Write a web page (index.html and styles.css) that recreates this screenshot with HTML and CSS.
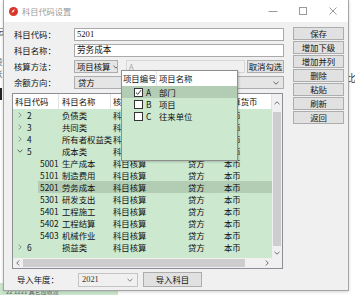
FILE: index.html
```html
<!DOCTYPE html>
<html lang="zh-CN">
<head>
<meta charset="utf-8">
<title>科目代码设置</title>
<link rel="stylesheet" href="styles.css">
</head>
<body>
<div class="bg-left">
  <span class="bl-ch c1">云</span>
  <span class="bl-ch c2">袋</span>
  <span class="bl-ch c3">张</span>
  <span class="bl-bar"></span>
</div>
<div class="bg-right"><span class="br-ch">比</span></div>
<div class="bg-bottom">
  <div class="bb-line">21 1124 应收股利及其他应收款</div>
  <div class="bb-line">22 1221 其它应收款</div>
</div>

<div class="dlg">
  <div class="titlebar">
    <span class="ticon"><svg width="9" height="9" viewBox="0 0 9 9"><circle cx="4.5" cy="4.5" r="4.5" fill="#d9352b"/><path d="M2.6 6.2 C2.8 4 4 2.6 6.3 2.5 C5 3.4 4.6 4.3 4.8 5.3 C4.1 4.8 3.4 5.3 2.6 6.2Z" fill="#fff"/></svg></span>
    <span class="ttext">科目代码设置</span>
    <span class="tctrls">
      <span class="tbtn"><svg width="10" height="10" viewBox="0 0 10 10"><path d="M0.5 5.5H9.5" stroke="#9a9a9a" stroke-width="1"/></svg></span>
      <span class="tbtn"><svg width="10" height="10" viewBox="0 0 10 10"><rect x="1.5" y="1.5" width="7" height="7" fill="none" stroke="#9a9a9a" stroke-width="1"/></svg></span>
      <span class="tbtn"><svg width="10" height="10" viewBox="0 0 10 10"><path d="M1.5 1.5L8.5 8.5M8.5 1.5L1.5 8.5" stroke="#9a9a9a" stroke-width="1"/></svg></span>
    </span>
  </div>

  <div class="dbody">
    <div class="main">
      <div class="form">
        <label class="flabel">科目代码：</label>
        <div class="input">5201</div>
        <label class="flabel">科目名称：</label>
        <div class="input">劳务成本</div>
        <label class="flabel">核算方法：</label>
        <div class="fline">
          <div class="combo combo-sm"><span class="ctext">项目核算</span><svg class="carr" width="6" height="4" viewBox="0 0 6 4"><path d="M0.5 0.8L3 3.2L5.5 0.8" fill="none" stroke="#555" stroke-width="0.9"/></svg></div>
          <div class="dis">A</div>
          <div class="btn btn-cancel">取消勾选</div>
        </div>
        <label class="flabel">余额方向：</label>
        <div class="combo"><span class="ctext">贷方</span><svg class="carr" width="6" height="4" viewBox="0 0 6 4"><path d="M0.5 0.8L3 3.2L5.5 0.8" fill="none" stroke="#555" stroke-width="0.9"/></svg></div>
      </div>

      <div class="table">
        <div class="tview">
          <div class="thead">
            <div class="th">科目代码</div>
            <div class="th th2">科目名称</div>
            <div class="th">核算方法</div>
            <div class="th">余额方向</div>
            <div class="th">核算货币</div>
          </div>
          <div class="tr"><div class="td c1"><span class="exp"><svg width="4" height="6" viewBox="0 0 4 6"><path d="M0.6 0.5L3.2 3L0.6 5.5" fill="none" stroke="#888" stroke-width="0.9"/></svg></span>2</div><div class="td">负债类</div><div class="td">科目核算</div><div class="td">贷方</div><div class="td">本币</div></div>
          <div class="tr"><div class="td c1"><span class="exp"><svg width="4" height="6" viewBox="0 0 4 6"><path d="M0.6 0.5L3.2 3L0.6 5.5" fill="none" stroke="#888" stroke-width="0.9"/></svg></span>3</div><div class="td">共同类</div><div class="td">科目核算</div><div class="td">贷方</div><div class="td">本币</div></div>
          <div class="tr"><div class="td c1"><span class="exp"><svg width="4" height="6" viewBox="0 0 4 6"><path d="M0.6 0.5L3.2 3L0.6 5.5" fill="none" stroke="#888" stroke-width="0.9"/></svg></span>4</div><div class="td">所有者权益类</div><div class="td">科目核算</div><div class="td">贷方</div><div class="td">本币</div></div>
          <div class="tr"><div class="td c1"><span class="exp"><svg width="6" height="4" viewBox="0 0 6 4"><path d="M0.5 0.6L3 3.2L5.5 0.6" fill="none" stroke="#555" stroke-width="0.9"/></svg></span>5</div><div class="td">成本类</div><div class="td">科目核算</div><div class="td">贷方</div><div class="td">本币</div></div>
          <div class="tr"><div class="td c1 child">5001</div><div class="td">生产成本</div><div class="td">科目核算</div><div class="td">贷方</div><div class="td">本币</div></div>
          <div class="tr"><div class="td c1 child">5101</div><div class="td">制造费用</div><div class="td">科目核算</div><div class="td">贷方</div><div class="td">本币</div></div>
          <div class="tr sel"><div class="td c1 child">5201</div><div class="td">劳务成本</div><div class="td">科目核算</div><div class="td">贷方</div><div class="td">本币</div></div>
          <div class="tr"><div class="td c1 child">5301</div><div class="td">研发支出</div><div class="td">科目核算</div><div class="td">贷方</div><div class="td">本币</div></div>
          <div class="tr"><div class="td c1 child">5401</div><div class="td">工程施工</div><div class="td">科目核算</div><div class="td">贷方</div><div class="td">本币</div></div>
          <div class="tr"><div class="td c1 child">5402</div><div class="td">工程结算</div><div class="td">科目核算</div><div class="td">贷方</div><div class="td">本币</div></div>
          <div class="tr"><div class="td c1 child">5403</div><div class="td">机械作业</div><div class="td">科目核算</div><div class="td">贷方</div><div class="td">本币</div></div>
          <div class="tr"><div class="td c1"><span class="exp"><svg width="4" height="6" viewBox="0 0 4 6"><path d="M0.6 0.5L3.2 3L0.6 5.5" fill="none" stroke="#888" stroke-width="0.9"/></svg></span>6</div><div class="td">损益类</div><div class="td">科目核算</div><div class="td">贷方</div><div class="td">本币</div></div>
        </div>
        <div class="vscroll">
          <div class="sbtn sbtn-v"><svg width="6" height="4" viewBox="0 0 6 4"><path d="M0.5 3.2L3 0.8L5.5 3.2" fill="none" stroke="#606060" stroke-width="0.9"/></svg></div>
          <div class="vthumb"></div>
          <div class="sbtn sbtn-v"><svg width="6" height="4" viewBox="0 0 6 4"><path d="M0.5 0.8L3 3.2L5.5 0.8" fill="none" stroke="#606060" stroke-width="0.9"/></svg></div>
        </div>
        <div class="hscroll">
          <div class="sbtn sbtn-h"><svg width="4" height="6" viewBox="0 0 4 6"><path d="M3.2 0.5L0.8 3L3.2 5.5" fill="none" stroke="#606060" stroke-width="0.9"/></svg></div>
          <div class="hthumb"></div>
          <div class="htrack"></div>
          <div class="sbtn sbtn-h"><svg width="4" height="6" viewBox="0 0 4 6"><path d="M0.8 0.5L3.2 3L0.8 5.5" fill="none" stroke="#606060" stroke-width="0.9"/></svg></div>
        </div>
        <div class="corner"></div>
      </div>

      <div class="bottom">
        <label class="blabel">导入年度：</label>
        <div class="combo combo-year"><span class="ctext">2021</span><svg class="carr" width="6" height="4" viewBox="0 0 6 4"><path d="M0.5 0.8L3 3.2L5.5 0.8" fill="none" stroke="#777" stroke-width="0.9"/></svg></div>
        <div class="btn btn-import">导入科目</div>
      </div>
    </div>

    <div class="side">
      <div class="btn sbtn-side">保存</div>
      <div class="btn sbtn-side">增加下级</div>
      <div class="btn sbtn-side">增加并列</div>
      <div class="btn sbtn-side">删除</div>
      <div class="btn sbtn-side">粘贴</div>
      <div class="btn sbtn-side">刷新</div>
      <div class="btn sbtn-side">返回</div>
    </div>
  </div>

  <div class="popup">
    <div class="phead">
      <div class="ph ph1">项目编号</div>
      <div class="ph ph2">项目名称</div>
    </div>
    <div class="prow psel">
      <div class="pc1"><span class="chk"><svg width="7" height="7" viewBox="0 0 7 7"><path d="M1 3.6L2.8 5.3L6 1.2" fill="none" stroke="#222" stroke-width="0.9"/></svg></span><span class="pcode">A</span></div>
      <div class="pc2">部门</div>
    </div>
    <div class="prow">
      <div class="pc1"><span class="chk"></span><span class="pcode">B</span></div>
      <div class="pc2">项目</div>
    </div>
    <div class="prow">
      <div class="pc1"><span class="chk"></span><span class="pcode">C</span></div>
      <div class="pc2">往来单位</div>
    </div>
  </div>
</div>
</body>
</html>
```

FILE: styles.css
```css
* { box-sizing: border-box; }
html, body { margin: 0; padding: 0; }
body {
  width: 355px;
  height: 295px;
  overflow: hidden;
  position: relative;
  background: #fff;
  font-family: "Noto Sans CJK SC", "Noto Sans", sans-serif;
  font-size: 8.4px;
  color: #111;
}

/* background application fragments */
.bg-left { position: absolute; left: 0; top: 0; width: 4px; height: 295px; overflow: hidden; }
.bl-ch { position: absolute; left: -6px; font-size: 8.4px; color: #555; line-height: 10px; }
.bl-ch.c1 { top: 26px; }
.bl-ch.c2 { top: 56px; }
.bl-ch.c3 { top: 68px; }
.bl-bar { position: absolute; left: 0; top: 88px; width: 2px; height: 12px; background: #222; }
.bg-right { position: absolute; left: 346px; top: 72px; }
.br-ch { font-size: 10px; color: #333; line-height: 11px; }
.bg-bottom {
  position: absolute; left: 0; top: 283px; width: 118px; height: 12px;
  background: #cce8cf; color: #666; font-size: 6px; line-height: 6px; padding-left: 6px;
  white-space: nowrap; overflow: hidden;
}
.bb-line { height: 6px; }

/* dialog window */
.dlg {
  position: absolute;
  left: 3px;
  top: 0;
  width: 346px;
  height: 291px;
  background: #f0f0f0;
  border: 1px solid #a5a5a5;
  border-top: none;
  box-shadow: 0 1px 3px rgba(0,0,0,0.18);
}
.titlebar {
  height: 22px;
  background: #fff;
  display: flex;
  align-items: center;
}
.ticon { width: 9px; height: 9px; margin-left: 5px; display: flex; }
.ttext { margin-left: 4px; color: #9a9a9a; font-size: 8.2px; line-height: 10px; }
.tctrls { margin-left: auto; display: flex; height: 22px; }
.tbtn { width: 30px; height: 22px; display: flex; align-items: center; justify-content: center; }

.dbody {
  display: grid;
  grid-template-columns: 271px 51px;
  column-gap: 10px;
  padding: 5px 0 0 8px;
}
.main { display: flex; flex-direction: column; }

/* form */
.form {
  display: grid;
  grid-template-columns: 60px 210px;
  grid-auto-rows: 13px;
  row-gap: 3px;
  padding: 1px 0 0 2px;
  width: 272px;
}
.flabel { line-height: 13px; color: #111; }
.input {
  background: #fff;
  border: 1px solid #a9a9a9;
  padding-left: 2px;
  line-height: 11px;
  font-family: "Liberation Serif", "Noto Sans CJK SC", serif;
  font-size: 8.6px;
}
.fline { display: flex; gap: 0; }
.combo {
  background: #e5e5e5;
  border: 1px solid #adadad;
  display: flex;
  align-items: center;
  padding: 0 4px 0 3px;
  line-height: 11px;
  white-space: nowrap;
  overflow: hidden;
}
.ctext { white-space: nowrap; }
.combo .carr { margin-left: auto; flex: none; }
.combo-sm { width: 44px; padding: 0 2px 0 2px; }
.combo-sm .carr { margin-left: 2px; }
.dis {
  width: 119px;
  margin-left: 8px;
  background: #f0f0f0;
  border: 1px solid #d6d6d6;
  color: #a0a0a0;
  font-size: 7.5px;
  line-height: 11px;
  padding-left: 2px;
}
.btn {
  background: #e1e1e1;
  border: 1px solid #adadad;
  text-align: center;
  color: #111;
  white-space: nowrap;
}
.btn-cancel { width: 37px; margin-left: 2px; line-height: 11px; }

/* table */
.table {
  margin-top: 4px;
  height: 176px;
  border: 1px solid #8c8f96;
  background: #fff;
  display: grid;
  grid-template-columns: 259px 10px;
  grid-template-rows: 164px 10px;
}
.tview { background: #cce8cf; overflow: hidden; }
.thead {
  display: grid;
  grid-template-columns: 46px 52px 75px 36px 50px;
  height: 15px;
  background: #fff;
}
.th {
  line-height: 15px;
  padding-left: 2px;
  border-right: 1px solid #e3e3e3;
  white-space: nowrap;
  overflow: hidden;
}
.th2 { padding-left: 3px; }
.tr {
  display: grid;
  grid-template-columns: 46px 52px 75px 36px 50px;
  height: 12px;
  line-height: 12px;
}
.tr.sel { background: linear-gradient(90deg, transparent 25px, #b2cdb4 25px); }
.td { padding-left: 2px; white-space: nowrap; overflow: visible; }
.tr .td:nth-child(2) { padding-left: 3px; }
.c1 { display: flex; align-items: center; padding-left: 3px; }
.c1.child { padding-left: 27px; }
.exp { width: 8px; height: 12px; display: flex; align-items: center; justify-content: center; margin-right: 3px; }

.vscroll {
  grid-row: 1 / 2;
  grid-column: 2 / 3;
  background: #f0f0f0;
  display: flex;
  flex-direction: column;
}
.sbtn { display: flex; align-items: center; justify-content: center; background: #f0f0f0; }
.sbtn-v { height: 17px; flex: none; }
.sbtn-v:last-child { height: 11px; }
.vthumb { flex: 1; background: #cdcdcd; margin: 1px 1px; }
.hscroll {
  grid-row: 2 / 3;
  grid-column: 1 / 2;
  background: #f0f0f0;
  display: flex;
}
.sbtn-h { width: 10px; flex: none; }
.hthumb { width: 222px; background: #cdcdcd; margin: 1px 0; }
.htrack { flex: 1; }
.corner { grid-row: 2 / 3; grid-column: 2 / 3; background: #f0f0f0; }

/* bottom */
.bottom {
  margin-top: 3px;
  height: 15px;
  display: flex;
  align-items: center;
  padding-left: 5px;
}
.blabel { width: 61px; line-height: 13px; }
.combo-year {
  width: 60px;
  height: 14px;
  background: #f0f0f0;
  border-color: #c4c4c4;
  font-family: "Liberation Serif", serif;
  font-size: 8.4px;
  color: #333;
}
.btn-import { width: 59px; height: 15px; margin-left: 5px; line-height: 13px; }

/* side buttons */
.side { display: flex; flex-direction: column; gap: 1px; }
.sbtn-side { height: 13px; line-height: 11px; }

/* dropdown popup */
.popup {
  position: absolute;
  left: 117px;
  top: 70px;
  width: 117px;
  height: 91px;
  background: #cce8cf;
  border: 1px solid #8f8f8f;
  box-shadow: 1px 1px 2px rgba(0,0,0,0.2);
}
.phead {
  display: grid;
  grid-template-columns: 35px 1fr;
  height: 15px;
  background: #fff;
}
.ph { line-height: 15px; white-space: nowrap; }
.ph1 { padding-left: 1px; border-right: 1px solid #e3e3e3; }
.ph2 { padding-left: 2px; }
.prow {
  display: grid;
  grid-template-columns: 35px 1fr;
  height: 12px;
  line-height: 12px;
}
.prow.psel { background: #b2cdb4; }
.pc1 { display: flex; align-items: center; padding-left: 12px; }
.chk {
  width: 9px; height: 9px;
  border: 1px solid #333;
  background: #fff;
  display: flex; align-items: center; justify-content: center;
}
.pcode { margin-left: 3px; }
.pc2 { padding-left: 2px; }
```
